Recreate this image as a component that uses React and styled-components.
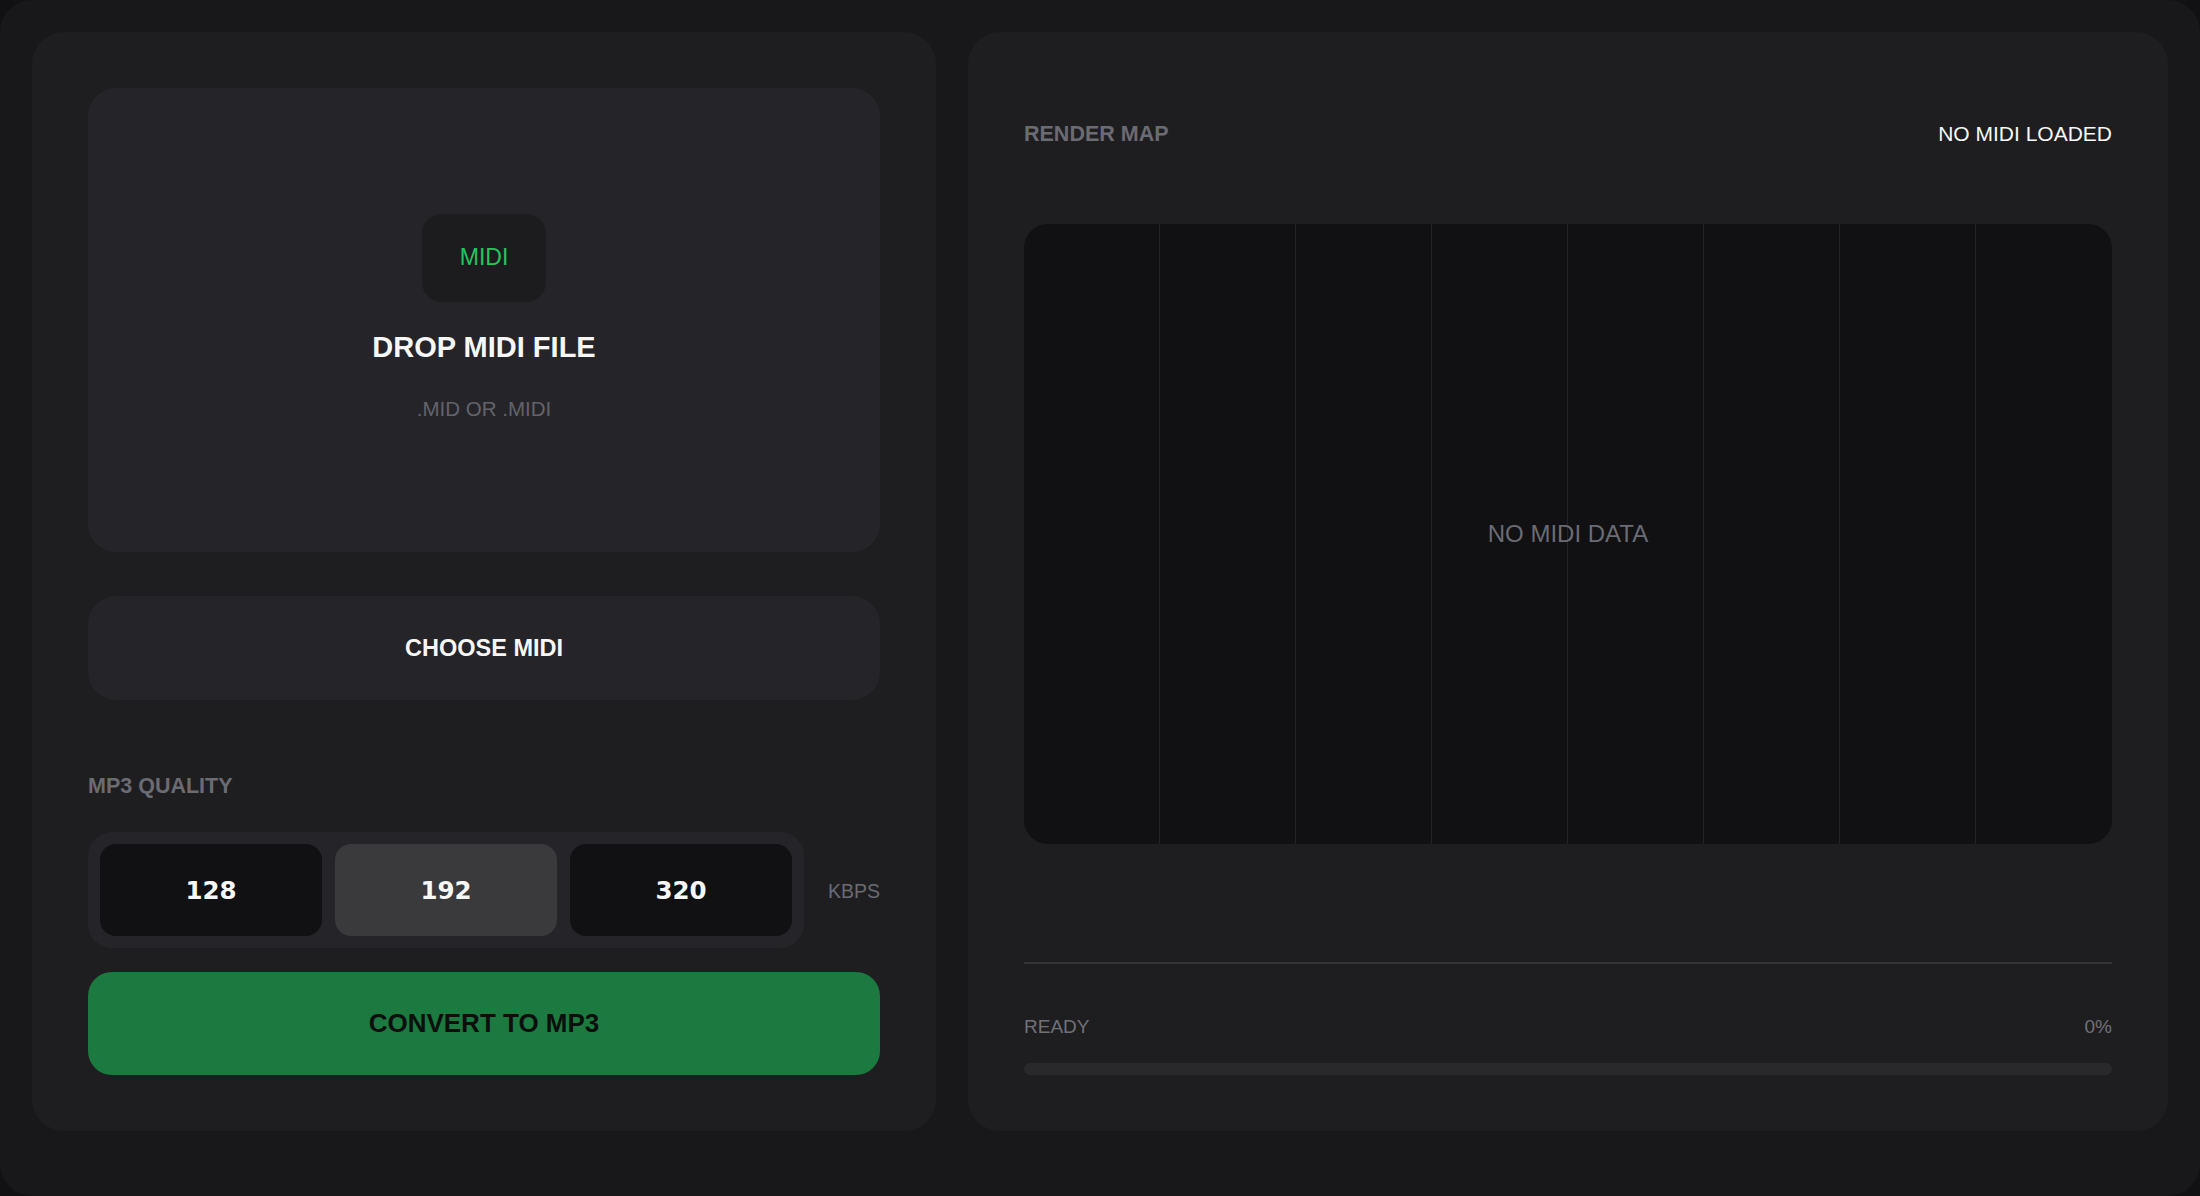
import React from "react";
import styled, { createGlobalStyle } from "styled-components";

const GlobalStyle = createGlobalStyle`
  * { box-sizing: border-box; }
  html, body { margin: 0; padding: 0; background: #111113; }
  body {
    font-family: "Liberation Sans", Arial, sans-serif;
    color: #f4f4f5;
    -webkit-font-smoothing: antialiased;
  }
  button { font-family: inherit; border: 0; cursor: pointer; }
`;

const Frame = styled.div`
  height: 100vh;
  overflow: hidden;
  background: #18181a;
  border-radius: 32px;
  padding: 32px;
  display: grid;
  grid-template-columns: 904px 1fr;
  align-content: start;
  gap: 32px;
`;

const Panel = styled.section`
  background: #1e1e20;
  border-radius: 32px;
  padding: 56px;
  display: flex;
  flex-direction: column;
`;

/* ---------- left: input & encoding ---------- */

const DropZone = styled.div`
  height: 464px;
  padding-bottom: 6px;
  background: #252529;
  border-radius: 28px;
  display: flex;
  flex-direction: column;
  align-items: center;
  justify-content: center;
`;

const Badge = styled.div`
  width: 124px;
  height: 88px;
  border-radius: 20px;
  background: #1c1c1e;
  color: #22c55e;
  font-size: 23px;
  display: flex;
  align-items: center;
  justify-content: center;
`;

const DropTitle = styled.div`
  margin-top: 28px;
  font-size: 29px;
  line-height: 35px;
  font-weight: 700;
  color: #f7f7f8;
`;

const DropHint = styled.div`
  margin-top: 31px;
  font-size: 20.5px;
  line-height: 25px;
  color: #63636b;
`;

const WideButton = styled.button`
  height: ${(p) => p.$h || 104}px;
  width: 100%;
  border-radius: ${(p) => p.$r || 28}px;
  background: ${(p) => p.$bg};
  color: ${(p) => p.$fg};
  font-size: ${(p) => p.$size}px;
  font-weight: 700;
  display: flex;
  align-items: center;
  justify-content: center;
`;

const ChooseWrap = styled.div`
  margin-top: 44px;
`;

const SectionLabel = styled.div`
  font-size: 21.5px;
  line-height: 26px;
  font-weight: 700;
  color: #6b6b73;
`;

const QualitySection = styled.div`
  margin-top: 73px;
  display: flex;
  flex-direction: column;
`;

const QualityRow = styled.div`
  margin-top: 33px;
  display: flex;
  align-items: center;
  justify-content: space-between;
`;

const Segmented = styled.div`
  display: flex;
  gap: 13px;
  padding: 12px;
  background: #252529;
  border-radius: 24px;
`;

const Segment = styled.button`
  width: 222px;
  height: 92px;
  border-radius: 16px;
  background: ${(p) => (p.$active ? "#3a3a3d" : "#111114")};
  color: #f7f7f8;
  font-family: "DejaVu Sans", sans-serif;
  font-weight: 700;
  font-size: 24.5px;
`;

const Unit = styled.span`
  font-size: 19.5px;
  color: #6b6b73;
  margin-top: 2px;
`;

const ConvertWrap = styled.div`
  margin-top: 24px;
`;

/* ---------- right: render map ---------- */

const Header = styled.div`
  height: 92px;
  display: flex;
  align-items: center;
  justify-content: space-between;
`;

const Status = styled.span`
  font-size: 21px;
  color: #f7f7f8;
`;

const MapCanvas = styled.div`
  position: relative;
  margin-top: 44px;
  height: 620px;
  background: #111113;
  border-radius: 24px;
  overflow: hidden;
  display: grid;
  grid-template-columns: repeat(8, 1fr);
`;

const Lane = styled.div`
  border-right: ${(p) => (p.$last ? "none" : "1px solid #242428")};
`;

const EmptyNote = styled.div`
  position: absolute;
  inset: 0;
  display: flex;
  align-items: center;
  justify-content: center;
  font-size: 24px;
  color: #6b6b73;
`;

const Footer = styled.div`
  margin-top: auto;
  display: flex;
  flex-direction: column;
`;

const Divider = styled.div`
  height: 2px;
  background: #333337;
`;

const ProgressRow = styled.div`
  margin-top: 52px;
  display: flex;
  justify-content: space-between;
  font-size: 19px;
  line-height: 22px;
  color: #71717a;
`;

const Track = styled.div`
  margin-top: 25px;
  height: 12px;
  border-radius: 6px;
  background: #29292c;
  overflow: hidden;
`;

const Fill = styled.div`
  height: 100%;
  background: #22c55e;
`;

const bitrates = [128, 192, 320];

export default function App() {
  const selected = 192;
  const progress = 0;

  return (
    <>
      <GlobalStyle />
      <Frame>
        <Panel>
          <DropZone>
            <Badge>MIDI</Badge>
            <DropTitle>DROP MIDI FILE</DropTitle>
            <DropHint>.MID OR .MIDI</DropHint>
          </DropZone>

          <ChooseWrap>
            <WideButton $bg="#252529" $fg="#f7f7f8" $size={23.5}>
              CHOOSE MIDI
            </WideButton>
          </ChooseWrap>

          <QualitySection>
            <SectionLabel>MP3 QUALITY</SectionLabel>
            <QualityRow>
              <Segmented>
                {bitrates.map((b) => (
                  <Segment key={b} $active={b === selected}>
                    {b}
                  </Segment>
                ))}
              </Segmented>
              <Unit>KBPS</Unit>
            </QualityRow>
          </QualitySection>

          <ConvertWrap>
            <WideButton $h={103} $r={24} $bg="#1c7a40" $fg="#0c0f0d" $size={26}>
              CONVERT TO MP3
            </WideButton>
          </ConvertWrap>
        </Panel>

        <Panel>
          <Header>
            <SectionLabel>RENDER MAP</SectionLabel>
            <Status>NO MIDI LOADED</Status>
          </Header>

          <MapCanvas>
            {Array.from({ length: 8 }).map((_, i) => (
              <Lane key={i} $last={i === 7} />
            ))}
            <EmptyNote>NO MIDI DATA</EmptyNote>
          </MapCanvas>

          <Footer>
            <Divider />
            <ProgressRow>
              <span>READY</span>
              <span>{progress}%</span>
            </ProgressRow>
            <Track>
              <Fill style={{ width: `${progress}%` }} />
            </Track>
          </Footer>
        </Panel>
      </Frame>
    </>
  );
}
